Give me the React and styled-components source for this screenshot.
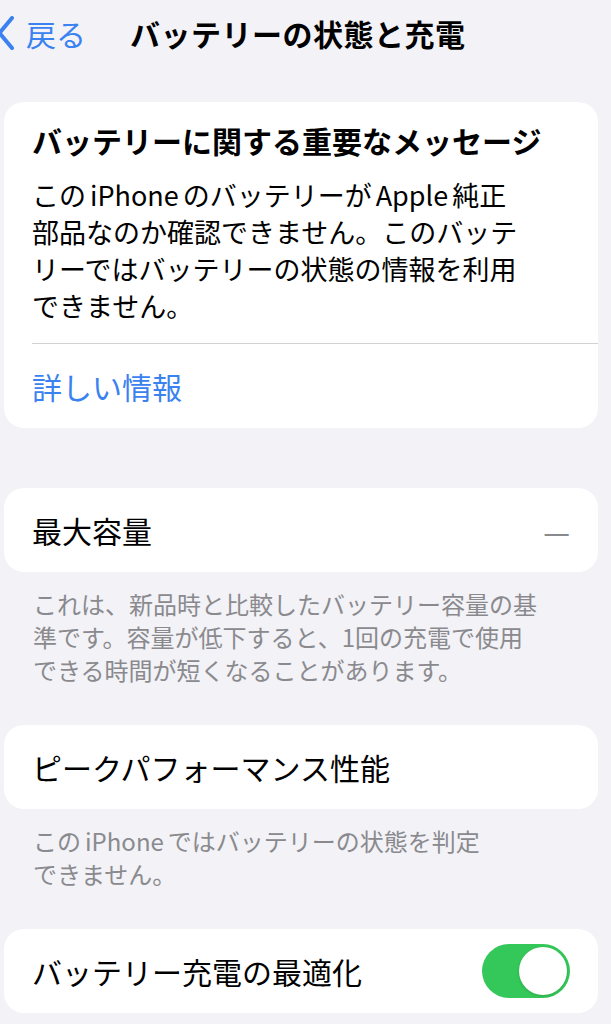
import React from 'react'
import styled, { createGlobalStyle } from 'styled-components'

const GlobalStyle = createGlobalStyle`
  html, body {
    margin: 0;
    padding: 0;
    background: #f2f2f7;
  }
  body {
    font-family: "Noto Sans CJK JP", "Noto Sans", sans-serif;
    color: #000;
    -webkit-font-smoothing: antialiased;
  }
`

function App() {
    return (
        <Page>
            <GlobalStyle />
            <Nav>
                <Back>
                    <Chevron viewBox="0 0 17 34">
                        <path d="M15 2 L2.5 17 L15 32" />
                    </Chevron>
                    <BackLabel>戻る</BackLabel>
                </Back>
                <NavTitle>バッテリーの状態と充電</NavTitle>
            </Nav>

            <Content>
                <Card>
                    <Message>
                        <MessageTitle>バッテリーに関する重要なメッセージ</MessageTitle>
                        <MessageBody>
                            この<Latin>iPhone</Latin>のバッテリーが<Latin>Apple</Latin>純正<br />
                            部品なのか確認できません。このバッテ<br />
                            リーではバッテリーの状態の情報を利用<br />
                            できません。
                        </MessageBody>
                    </Message>
                    <Divider />
                    <Row>
                        <LinkText>詳しい情報</LinkText>
                    </Row>
                </Card>

                <Section $gap={60}>
                    <Card>
                        <Row>
                            <RowLabel>最大容量</RowLabel>
                            <Dash>—</Dash>
                        </Row>
                    </Card>
                    <Footer>
                        これは、新品時と比較したバッテリー容量の基<br />
                        準です。容量が低下すると、1回の充電で使用<br />
                        できる時間が短くなることがあります。
                    </Footer>
                </Section>

                <Section $gap={39}>
                    <Card>
                        <Row>
                            <RowLabel>ピークパフォーマンス性能</RowLabel>
                        </Row>
                    </Card>
                    <Footer>
                        この<Latin>iPhone</Latin>ではバッテリーの状態を判定<br />
                        できません。
                    </Footer>
                </Section>

                <Section $gap={39}>
                    <Card>
                        <Row>
                            <RowLabel>バッテリー充電の最適化</RowLabel>
                            <Toggle $on>
                                <Knob />
                            </Toggle>
                        </Row>
                    </Card>
                </Section>
            </Content>
        </Page>
    )
}

export default App

const Page = styled.div`
width: 611px;
min-height: 1024px;
overflow: hidden;
background: #f2f2f7;
`

const Nav = styled.div`
height: 66px;
display: flex;
align-items: center;
`

const Back = styled.div`
display: flex;
align-items: center;
gap: 12px;
margin-left: -3px;
`

const Chevron = styled.svg`
width: 17px;
height: 34px;
fill: none;
stroke: #3a82f0;
stroke-width: 4;
stroke-linecap: round;
stroke-linejoin: round;
`

const BackLabel = styled.span`
font-size: 30px;
line-height: 36px;
color: #3a82f0;
`

const NavTitle = styled.h1`
margin: 0 0 0 44px;
font-size: 30px;
line-height: 36px;
font-weight: 700;
letter-spacing: 0.5px;
`

const Content = styled.div`
padding: 36px 13px 0 4px;
`

const Section = styled.div`
margin-top: ${p => p.$gap}px;
`

const Card = styled.div`
background: #fff;
border-radius: 20px;
overflow: hidden;
`

const Message = styled.div`
padding: 20px 28px 19px 28px;
`

const MessageTitle = styled.h2`
margin: 0;
font-size: 30px;
line-height: 37px;
font-weight: 700;
white-space: nowrap;
`

const MessageBody = styled.p`
margin: 17px 0 0;
font-size: 27px;
line-height: 37px;
white-space: nowrap;
`

const Latin = styled.span`
margin: 0 4px;
`

const Divider = styled.div`
height: 1px;
margin-left: 28px;
background: #d1d1d6;
`

const Row = styled.div`
height: 84px;
padding: 0 28px;
display: flex;
align-items: center;
justify-content: space-between;
`

const RowLabel = styled.span`
font-size: 30px;
line-height: 37px;
`

const LinkText = styled.span`
font-size: 30px;
line-height: 37px;
color: #3a82f0;
`

const Dash = styled.span`
font-size: 30px;
line-height: 37px;
color: #8a8a8e;
`

const Footer = styled.p`
margin: 0;
padding: 15px 29px 0;
font-size: 24px;
line-height: 33px;
color: #8a8a8e;
white-space: nowrap;
`

const Toggle = styled.div`
width: 88px;
height: 54px;
border-radius: 27px;
background: ${p => (p.$on ? '#34c759' : '#e9e9eb')};
display: flex;
align-items: center;
justify-content: ${p => (p.$on ? 'flex-end' : 'flex-start')};
padding: 0 3px;
box-sizing: border-box;
`

const Knob = styled.div`
width: 48px;
height: 48px;
border-radius: 50%;
background: #fff;
box-shadow: 0 1px 3px rgba(0, 0, 0, 0.15);
`
